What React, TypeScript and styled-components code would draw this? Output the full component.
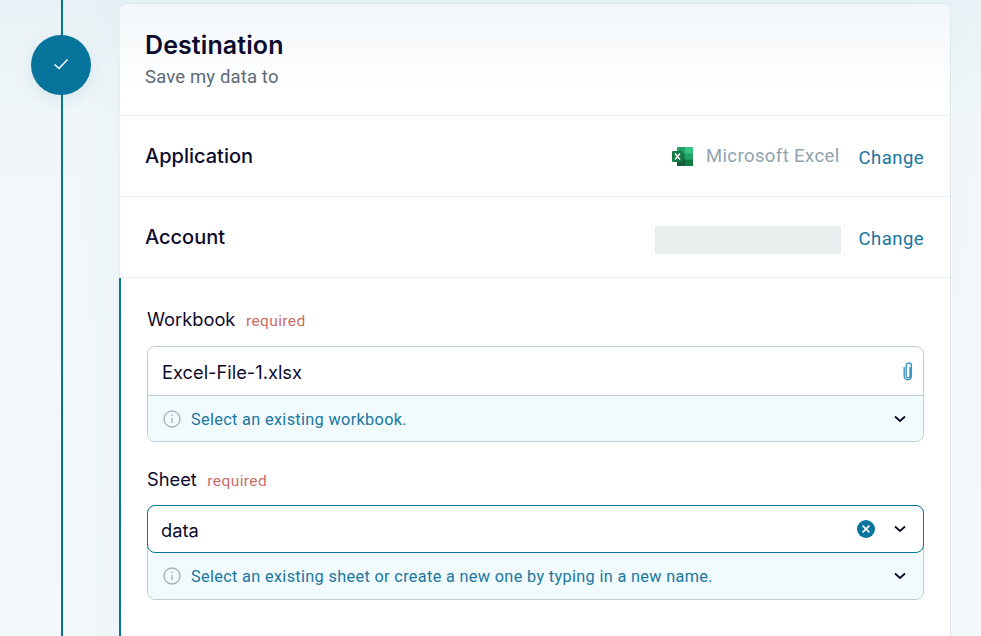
import React from "react";
import styled, { createGlobalStyle } from "styled-components";

const GlobalStyle = createGlobalStyle`
  html, body {
    margin: 0;
    height: 100%;
    overflow: hidden;
  }
  body {
    background: linear-gradient(180deg, #e8f1f5 0, #f1f7f9 120px, #f3f8fa 100%);
    font-family: Roboto, "Liberation Sans", sans-serif;
  }
`;

const Page = styled.div`
  display: flex;
  height: 636px;
  padding-top: 3px;
  box-sizing: border-box;
`;

const Rail = styled.div`
  position: relative;
  width: 119px;
  flex: none;
  margin-top: -3px;
  &::before {
    content: "";
    position: absolute;
    left: 61px;
    top: 0;
    bottom: 0;
    width: 2px;
    background: #07749c;
  }
`;

const StepCircle = styled.div`
  position: absolute;
  left: 31px;
  top: 35px;
  width: 60px;
  height: 60px;
  border-radius: 50%;
  background: #07749c;
  display: flex;
  align-items: center;
  justify-content: center;
  padding-bottom: 2px;
  box-sizing: border-box;
  box-shadow: 0 6px 18px rgba(7, 116, 156, 0.1);
`;

const Card = styled.div`
  width: 832px;
  flex: none;
  height: 640px;
  box-sizing: border-box;
  background: #fff;
  border: 1px solid #dbe8ef;
  border-bottom: none;
  border-left-color: #e4eef3;
  border-radius: 8px 8px 0 0;
  box-shadow: -12px 0 24px rgba(220, 235, 242, 0.25);
`;

const Header = styled.div`
  height: 112px;
  box-sizing: border-box;
  padding: 27px 26px 0 25px;
  border-bottom: 1px solid #e8edf0;
  border-radius: 8px 8px 0 0;
  background: linear-gradient(180deg, #f2f7f9 0, #ffffff 85px);
`;

const Title = styled.h1`
  margin: 0;
  font-family: Inter, sans-serif;
  font-size: 25px;
  line-height: 28px;
  font-weight: 600;
  letter-spacing: 0.1px;
  color: #0d0b2d;
`;

const Subtitle = styled.div`
  margin-top: 7px;
  font-size: 18.5px;
  line-height: 22px;
  letter-spacing: 0.15px;
  color: #5c6b78;
`;

const Row = styled.div`
  height: 81px;
  box-sizing: border-box;
  padding: 0 26px 0 25px;
  border-bottom: 1px solid #e8edf0;
  display: flex;
  align-items: center;
  gap: 19px;
`;

const RowLabel = styled.div`
  font-family: Inter, sans-serif;
  font-size: 20px;
  font-weight: 500;
  color: #0d0b2d;
  margin-right: auto;
  margin-top: -1px;
`;

const AppName = styled.div`
  display: flex;
  align-items: center;
  gap: 13px;
  font-size: 18.5px;
  letter-spacing: 0.4px;
  color: #8fa3af;
`;

const Blurred = styled.div`
  width: 186px;
  height: 28px;
  margin: 6px -1px 0 0;
  background: #e9edee;
`;

const ChangeLink = styled.a`
  font-size: 18.5px;
  letter-spacing: 0.45px;
  margin-top: 3px;
  color: #1a77a0;
`;

const Form = styled.div`
  height: 360px;
  box-sizing: border-box;
  margin-left: -1px;
  border-left: 2px solid #07749c;
  padding: 27px 26px 0 26px;
`;

const FieldLabel = styled.div`
  display: flex;
  align-items: baseline;
  gap: 10.5px;
  height: 28px;
  line-height: 28px;
`;

const LabelText = styled.span`
  font-family: Inter, sans-serif;
  font-size: 18.3px;
  color: #0d0b2d;
`;

const Required = styled.span`
  font-size: 15.5px;
  letter-spacing: 0.4px;
  color: #cc6d68;
`;

const Field = styled.div<{ $focused?: boolean }>`
  margin: ${(p) => (p.$focused ? "12px" : "13px")} 0 23px;
  border: 1px solid #bccdd6;
  border-radius: 8px;
`;

const InputRow = styled.div<{ $focused?: boolean }>`
  height: ${(p) => (p.$focused ? "48px" : "49px")};
  box-sizing: border-box;
  display: flex;
  align-items: center;
  gap: 19px;
  padding: 0 ${(p) => (p.$focused ? "17px" : "9px")} 0 ${(p) => (p.$focused ? "13px" : "14px")};
  margin: ${(p) => (p.$focused ? "-1px -1px 0" : "0")};
  border-radius: ${(p) => (p.$focused ? "8px" : "8px 8px 0 0")};
  border: ${(p) => (p.$focused ? "1px solid #07749c" : "none")};
  border-bottom: ${(p) => (p.$focused ? "1px solid #07749c" : "1px solid #bccdd6")};
  background: #fff;
`;

const InputValue = styled.div<{ $lowered?: boolean }>`
  flex: 1;
  font-family: Inter, sans-serif;
  font-size: 18.3px;
  margin-top: ${(p) => (p.$lowered ? "2px" : "0")};
  color: #0d0b2d;
`;

const Hint = styled.div<{ $tall?: boolean }>`
  height: ${(p) => (p.$tall ? "46px" : "45px")};
  box-sizing: border-box;
  display: flex;
  align-items: center;
  gap: 10px;
  padding: 0 17px 0 15px;
  background: #f1fafd;
  border-radius: 0 0 8px 8px;
`;

const HintText = styled.div<{ $lowered?: boolean }>`
  flex: 1;
  font-size: 16.3px;
  letter-spacing: 0.33px;
  margin-top: ${(p) => (p.$lowered ? "2px" : "0")};
  color: #1a77a0;
`;

const Check = () => (
  <svg width="18" height="18" viewBox="0 0 18 18" fill="none">
    <path d="M2.5 9.5 7 13.5 15.5 4.5" stroke="#fff" strokeWidth="1.6" />
  </svg>
);

const ExcelIcon = () => (
  <svg width="21" height="19" viewBox="0 0 21 19">
    <rect x="5" y="0" width="16" height="19" rx="1" fill="#21a366" />
    <rect x="13" y="0" width="8" height="6.5" fill="#33c481" />
    <rect x="5" y="6.5" width="8" height="6" fill="#107c41" />
    <rect x="13" y="12.5" width="8" height="6.5" fill="#107c41" />
    <rect x="5" y="12.5" width="8" height="6.5" fill="#185c37" />
    <rect x="0" y="4" width="11" height="11" rx="1" fill="#127a45" />
    <path d="M3 6.5 8 12.5M8 6.5 3 12.5" stroke="#fff" strokeWidth="1.4" />
  </svg>
);

const InfoIcon = () => (
  <svg width="18" height="18" viewBox="0 0 18 18" fill="none">
    <circle cx="9" cy="9" r="8" stroke="#9fb0ba" strokeWidth="1.3" />
    <path d="M9 8v5" stroke="#9fb0ba" strokeWidth="1.4" />
    <circle cx="9" cy="5.3" r="0.9" fill="#9fb0ba" />
  </svg>
);

const Chevron = () => (
  <svg width="12" height="8" viewBox="0 0 12 8" fill="none">
    <path d="M1 1.5 6 6l5-4.5" stroke="#0d0b2d" strokeWidth="1.8" />
  </svg>
);

const Clip = () => (
  <svg width="12" height="19" viewBox="0 0 12 19" fill="none">
    <path
      d="M8 5v9a1.9 1.9 0 0 1-3.8 0V3.6a2.6 2.6 0 0 1 5.2 0v10.6a3.6 3.6 0 0 1-7.2 0V5"
      stroke="#3f97c1"
      strokeWidth="1.4"
    />
  </svg>
);

const ClearIcon = () => (
  <svg width="18" height="18" viewBox="0 0 18 18" fill="none">
    <circle cx="9" cy="9" r="9" fill="#07749c" />
    <path d="M5.6 5.6l6.8 6.8M12.4 5.6l-6.8 6.8" stroke="#fff" strokeWidth="1.7" />
  </svg>
);

const App: React.FC = () => {
  return (
    <>
      <GlobalStyle />
      <Page>
        <Rail>
          <StepCircle>
            <Check />
          </StepCircle>
        </Rail>
        <Card>
          <Header>
            <Title>Destination</Title>
            <Subtitle>Save my data to</Subtitle>
          </Header>
          <Row>
            <RowLabel>Application</RowLabel>
            <AppName>
              <ExcelIcon />
              Microsoft Excel
            </AppName>
            <ChangeLink>Change</ChangeLink>
          </Row>
          <Row>
            <RowLabel>Account</RowLabel>
            <Blurred />
            <ChangeLink>Change</ChangeLink>
          </Row>
          <Form>
            <FieldLabel>
              <LabelText>Workbook</LabelText>
              <Required>required</Required>
            </FieldLabel>
            <Field>
              <InputRow>
                <InputValue $lowered>Excel-File-1.xlsx</InputValue>
                <Clip />
              </InputRow>
              <Hint>
                <InfoIcon />
                <HintText $lowered>Select an existing workbook.</HintText>
                <Chevron />
              </Hint>
            </Field>
            <FieldLabel>
              <LabelText>Sheet</LabelText>
              <Required>required</Required>
            </FieldLabel>
            <Field $focused>
              <InputRow $focused>
                <InputValue $lowered>data</InputValue>
                <ClearIcon />
                <Chevron />
              </InputRow>
              <Hint $tall>
                <InfoIcon />
                <HintText>Select an existing sheet or create a new one by typing in a new name.</HintText>
                <Chevron />
              </Hint>
            </Field>
          </Form>
        </Card>
      </Page>
    </>
  );
};

export default App;
